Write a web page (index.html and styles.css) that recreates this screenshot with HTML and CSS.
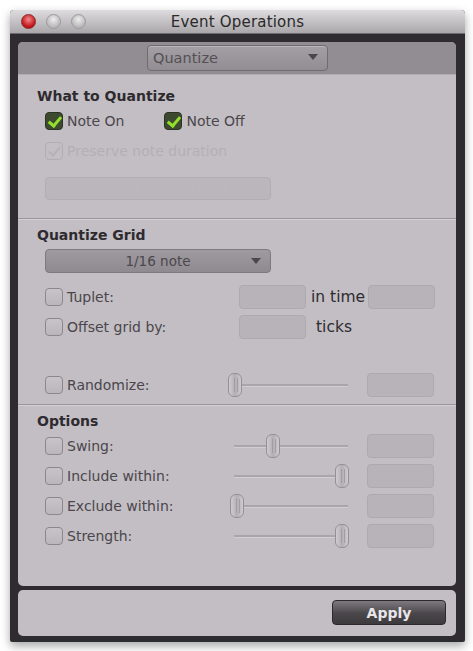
FILE: index.html
```html
<!DOCTYPE html>
<html lang="en">

<head>
    <meta charset="UTF-8">
    <title>Event Operations</title>
    <link rel="stylesheet" href="styles.css">
</head>

<body>
    <div class="window">
        <div class="titlebar">
            <div class="lights">
                <span class="light red"></span>
                <span class="light"></span>
                <span class="light"></span>
            </div>
            <div class="title">Event Operations</div>
        </div>

        <div class="frame">
            <div class="panel">
                <div class="panel-head">
                    <div class="select top-select">
                        <span>Quantize</span>
                        <span class="arrow"></span>
                    </div>
                </div>

                <!-- What to Quantize -->
                <div class="section">
                    <h4>What to Quantize</h4>
                    <div class="row">
                        <label class="check"><span class="box on"></span>Note On</label>
                        <label class="check second"><span class="box on"></span>Note Off</label>
                    </div>
                    <div class="row">
                        <label class="check disabled"><span class="box faint"></span>Preserve note duration</label>
                    </div>
                    <div class="ghost-button">Preserve note duration</div>
                </div>

                <!-- Quantize Grid -->
                <div class="section grid-section">
                    <h4>Quantize Grid</h4>
                    <div class="select grid-select">
                        <span>1/16 note</span>
                        <span class="arrow"></span>
                    </div>
                    <div class="row">
                        <label class="check wide"><span class="box"></span>Tuplet:</label>
                        <div class="field"></div>
                        <span class="unit">in time</span>
                        <div class="field"></div>
                    </div>
                    <div class="row">
                        <label class="check wide"><span class="box"></span>Offset grid by:</label>
                        <div class="field"></div>
                        <span class="unit ticks">ticks</span>
                    </div>
                    <div class="row randomize">
                        <label class="check wide"><span class="box"></span>Randomize:</label>
                        <div class="slider"><span class="thumb" style="left: 0%"></span></div>
                        <div class="field"></div>
                    </div>
                </div>

                <!-- Options -->
                <div class="section options">
                    <h4>Options</h4>
                    <div class="row">
                        <label class="check wide"><span class="box"></span>Swing:</label>
                        <div class="slider"><span class="thumb" style="left: 31%"></span></div>
                        <div class="field"></div>
                    </div>
                    <div class="row">
                        <label class="check wide"><span class="box"></span>Include within:</label>
                        <div class="slider"><span class="thumb" style="left: 88%"></span></div>
                        <div class="field"></div>
                    </div>
                    <div class="row">
                        <label class="check wide"><span class="box"></span>Exclude within:</label>
                        <div class="slider"><span class="thumb" style="left: 2%"></span></div>
                        <div class="field"></div>
                    </div>
                    <div class="row">
                        <label class="check wide"><span class="box"></span>Strength:</label>
                        <div class="slider"><span class="thumb" style="left: 88%"></span></div>
                        <div class="field"></div>
                    </div>
                </div>
            </div>

            <div class="footer">
                <button type="button">Apply</button>
            </div>
        </div>
    </div>
</body>

</html>
```

FILE: styles.css
```css
* {
    font-family: "DejaVu Sans", "Noto Sans", sans-serif;
    margin: 0;
    box-sizing: border-box;
}

body {
    margin: 0;
    background: #fff;
    width: 473px;
    height: 651px;
    overflow: hidden;
}

.window {
    margin: 10px 0 0 10px;
    width: 455px;
    height: 632px;
    display: flex;
    flex-direction: column;
    background: #2e2c30;
    border-radius: 4px 4px 2px 2px;
    box-shadow: 0 4px 10px rgba(0, 0, 0, 0.35);
}

.titlebar {
    height: 24px;
    position: relative;
    display: flex;
    align-items: center;
    justify-content: center;
    background: linear-gradient(#dedcde, #aaa7aa);
    border-radius: 4px 4px 0 0;
    border-bottom: solid 1px #6c6a6c;
}

.lights {
    position: absolute;
    left: 11px;
    top: 4px;
    display: flex;
    gap: 10px;
}

.light {
    width: 15px;
    height: 15px;
    border-radius: 50%;
    background: radial-gradient(circle at 50% 35%, #eeeeee, #b9b7b9 70%);
    border: solid 1px #9c9a9c;
}

.light.red {
    background: radial-gradient(circle at 50% 35%, #f08a8a, #c4161c 65%, #8a0c10);
    border-color: #8a2a2a;
}

.title {
    font-size: 15px;
    color: #2a2a2a;
    letter-spacing: 0.2px;
}

.frame {
    flex: 1;
    display: flex;
    flex-direction: column;
    padding: 8px 9px 6px 8px;
    gap: 4px;
}

.panel {
    height: 544px;
    background: #c3bec4;
    border-radius: 5px;
    overflow: hidden;
}

.panel-head {
    height: 33px;
    background: #928d93;
    display: flex;
    justify-content: center;
    align-items: center;
    padding-left: 1px;
    border-bottom: solid 1px #b3aeb4;
}

.select {
    display: flex;
    align-items: center;
    border-radius: 4px;
    border: solid 1px #6f6b70;
    color: #4b474c;
    position: relative;
}

.top-select {
    width: 181px;
    height: 26px;
    padding-left: 5px;
    font-size: 14.5px;
    color: #545055;
    background: linear-gradient(#a39fa4, #918d92);
    box-shadow: inset 0 1px 0 rgba(255, 255, 255, 0.25);
}

.arrow {
    position: absolute;
    right: 9px;
    top: 8px;
    width: 0;
    height: 0;
    border-left: 5px solid transparent;
    border-right: 5px solid transparent;
    border-top: 6px solid #4a464b;
}

.section {
    padding: 11px 0 0 19px;
    border-bottom: solid 1px #9b969c;
    box-shadow: 0 1px 0 #d4cfd5;
}

h4 {
    font-size: 14px;
    font-weight: bold;
    color: #2e2b2f;
    height: 20px;
    line-height: 20px;
}

.row {
    display: flex;
    align-items: center;
    height: 30px;
    padding-left: 8px;
    font-size: 14px;
    color: #4a464b;
}

.check {
    display: flex;
    align-items: center;
    gap: 4px;
}

.check.second {
    margin-left: 40px;
}

.check.wide {
    width: 194px;
}

.check.disabled {
    color: #b4afb5;
}

.box {
    width: 18px;
    height: 18px;
    flex-shrink: 0;
    border-radius: 4px;
    border: solid 1px #8b878c;
    background: linear-gradient(#c8c3c9, #bbb6bc);
    position: relative;
}

.box.on {
    background: #3e4a30;
    border-color: #2c3322;
}

.box.on::after,
.box.faint::after {
    content: '';
    position: absolute;
    left: 5px;
    top: 1px;
    width: 5px;
    height: 10px;
    border-right: solid 3px #93e02c;
    border-bottom: solid 3px #93e02c;
    transform: rotate(40deg);
}

.box.faint {
    border-color: #b2adb3;
    background: transparent;
}

.box.faint::after {
    border-color: #b6b1b7;
    border-width: 2px;
}

.ghost-button {
    margin: 11px 0 18px 8px;
    width: 226px;
    height: 23px;
    border-radius: 4px;
    border: solid 1px #b2adb3;
    background: #bbb6bc;
    color: #bdb8be;
    font-size: 12px;
    text-align: center;
    line-height: 21px;
}

.grid-section {
    padding-top: 6px;
}

.grid-select {
    margin: 4px 0 9px 8px;
    width: 226px;
    height: 24px;
    justify-content: center;
    font-size: 13.5px;
    background: linear-gradient(#9f9aa0, #8e8a8f);
    border-color: #7d797e;
}

.field {
    width: 67px;
    height: 24px;
    flex-shrink: 0;
    border-radius: 4px;
    border: solid 1px #aea9af;
    background: #b8b3b9;
}

.unit {
    font-size: 15.5px;
    color: #2e2b2f;
    margin: 0 3px 0 5px;
}

.unit.ticks {
    margin-left: 10px;
}

.randomize {
    margin-top: 28px;
    margin-bottom: 4px;
}

.slider {
    width: 122px;
    height: 24px;
    flex-shrink: 0;
    margin: 0 17px 0 -11px;
    position: relative;
}

.slider::before {
    content: '';
    position: absolute;
    left: 6px;
    right: 2px;
    top: 11px;
    height: 2px;
    background: #aaa5ab;
    border-bottom: solid 1px #d2cdd3;
}

.thumb {
    position: absolute;
    top: 0;
    width: 14px;
    height: 24px;
    border-radius: 6px;
    border: solid 1px #958f96;
    background: linear-gradient(90deg, #d0cbd1, #b3aeb4 50%, #cfcad0);
}

.thumb::after {
    content: '';
    position: absolute;
    left: 5px;
    top: 4px;
    bottom: 4px;
    width: 2px;
    border-left: solid 1px #a29da3;
    border-right: solid 1px #a29da3;
}

.options {
    padding-top: 6px;
    border-bottom: none;
    box-shadow: none;
}

.footer {
    flex: 1;
    background: #c3bec4;
    border-radius: 5px;
    display: flex;
    align-items: center;
    justify-content: flex-end;
    padding-right: 10px;
}

button {
    width: 114px;
    height: 25px;
    border-radius: 4px;
    border: solid 1px #2b292c;
    background: linear-gradient(#7d797e, #4a474b 55%, #3d3a3e);
    color: #e8e6e8;
    font-size: 14px;
    font-weight: bold;
    margin-bottom: 1px;
}
```
